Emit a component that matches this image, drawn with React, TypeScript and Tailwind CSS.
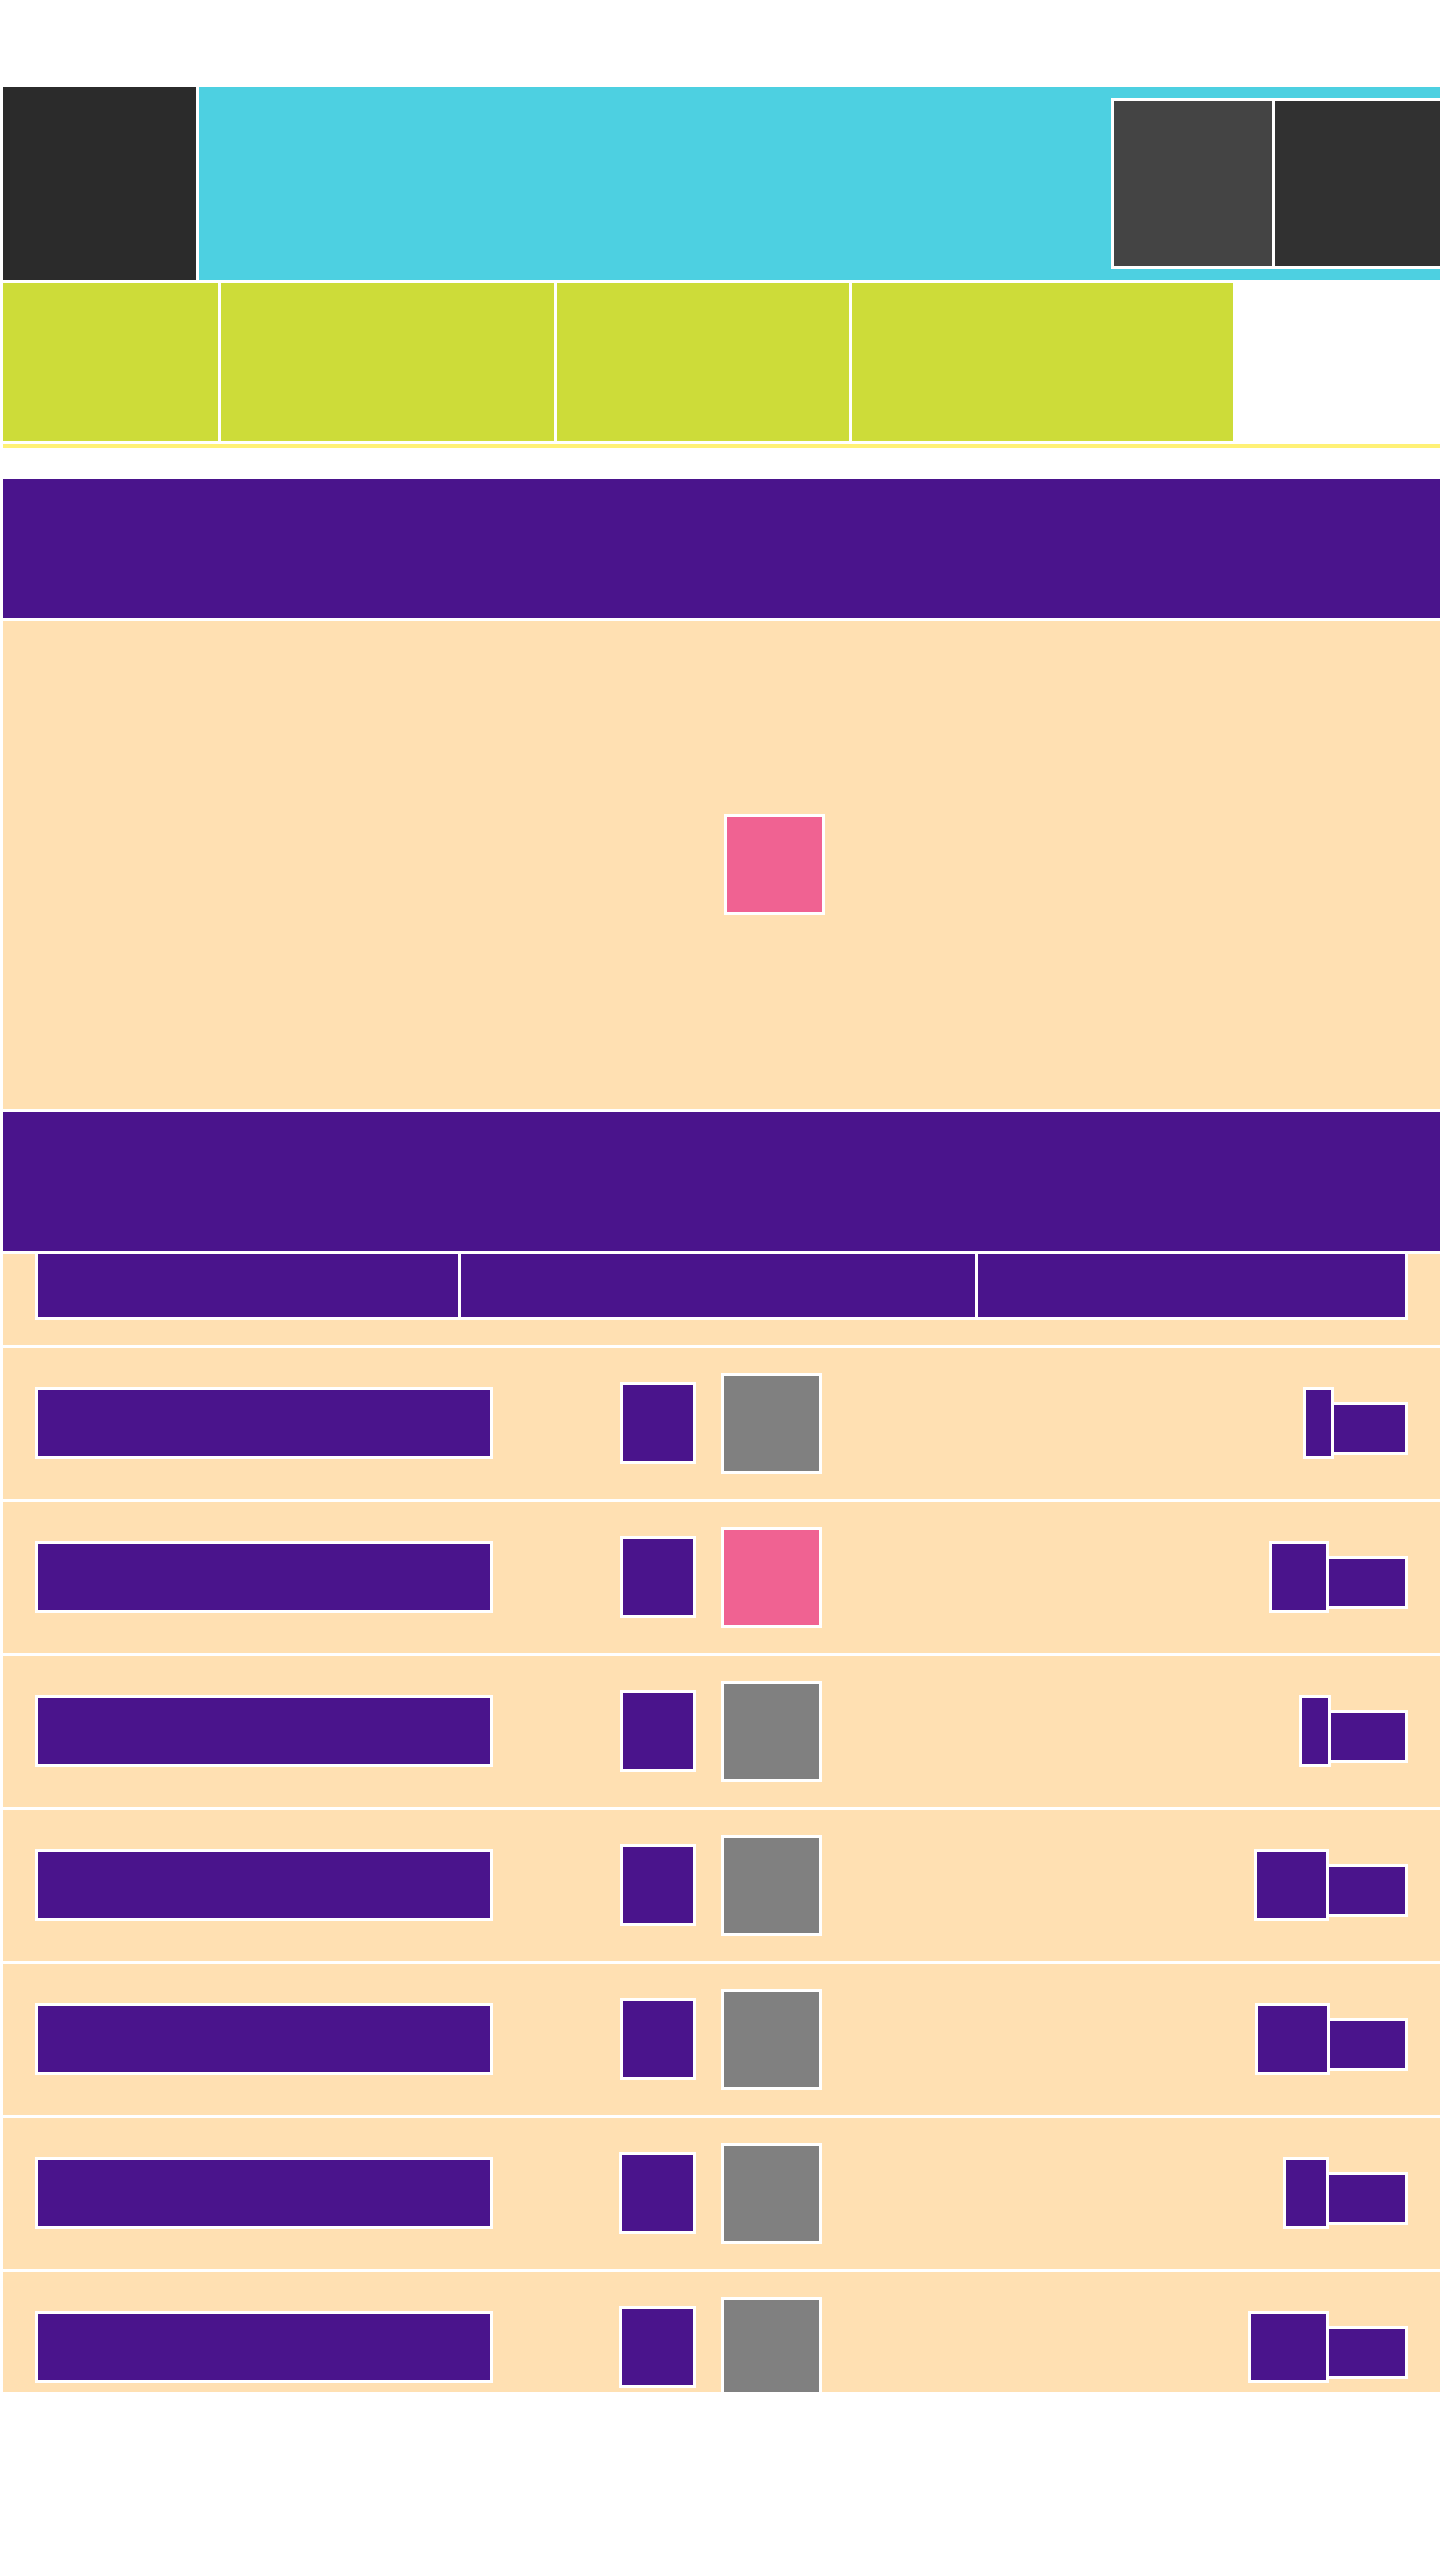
import React from "react";

type Row = {
  mid: string;
  small: string;
  a: string;
  b: string;
  last?: boolean;
};

const rows: Row[] = [
  { mid: "bg-[#808080]", small: "ml-[127px] w-[76px]", a: "w-[31px]", b: "w-[77px]" },
  { mid: "bg-[#f06292]", small: "ml-[127px] w-[76px]", a: "w-[60px]", b: "w-[82px]" },
  { mid: "bg-[#808080]", small: "ml-[127px] w-[76px]", a: "w-[32px]", b: "w-[80px]" },
  { mid: "bg-[#808080]", small: "ml-[127px] w-[76px]", a: "w-[75px]", b: "w-[82px]" },
  { mid: "bg-[#808080]", small: "ml-[127px] w-[76px]", a: "w-[75px]", b: "w-[81px]" },
  { mid: "bg-[#808080]", small: "ml-[126px] w-[77px]", a: "w-[46px]", b: "w-[82px]" },
  { mid: "bg-[#808080]", small: "ml-[126px] w-[77px]", a: "w-[81px]", b: "w-[82px]", last: true },
];

function TableRow({ row }: { row: Row }) {
  return (
    <div
      className={
        row.last
          ? "flex h-[123px] items-start overflow-hidden border-t-[3px] border-white bg-[#ffe0b2] px-[32px]"
          : "flex h-[154px] items-start border-t-[3px] border-white bg-[#ffe0b2] px-[32px]"
      }
    >
      <div className="mt-[39px] h-[72px] w-[458px] shrink-0 border-[3px] border-white bg-[#4a148c]" />
      <div className={`${row.small} mt-[34px] h-[82px] shrink-0 border-[3px] border-white bg-[#4a148c]`} />
      <div className={`ml-[25px] mt-[25px] h-[101px] w-[101px] shrink-0 border-[3px] border-white ${row.mid}`} />
      <div className="ml-auto flex items-start">
        <div className={`${row.a} mt-[39px] h-[72px] shrink-0 border-[3px] border-white bg-[#4a148c]`} />
        <div className={`${row.b} -ml-[3px] mt-[54px] h-[53px] shrink-0 border-[3px] border-white bg-[#4a148c]`} />
      </div>
    </div>
  );
}

export default function App() {
  return (
    <div className="h-[2560px] w-[1440px] overflow-hidden bg-white font-['Liberation_Sans',sans-serif]">
      <div className="pl-[3px] pt-[87px]">
        {/* Header */}
        <header className="flex h-[193px] gap-[3px]">
          <div className="w-[193px] shrink-0 bg-[#2b2b2b]" />
          <div className="flex min-w-0 flex-1 items-center bg-[#4dd0e1] pl-[912px]">
            <div className="flex shrink-0 gap-[3px] border-[3px] border-white bg-white">
              <div className="h-[165px] w-[158px] bg-[#444444]" />
              <div className="h-[165px] w-[170px] bg-[#313131]" />
            </div>
          </div>
        </header>

        {/* Nav */}
        <nav className="mt-[3px] flex h-[158px] gap-[3px]">
          <div className="w-[215px] bg-[#cddc39]" />
          <div className="w-[333px] bg-[#cddc39]" />
          <div className="w-[292px] bg-[#cddc39]" />
          <div className="w-[381px] bg-[#cddc39]" />
        </nav>
        <div className="mt-[3px] h-[4px] bg-[#fff176]" />

        {/* Section heading */}
        <div className="mt-[31px] h-[139px] bg-[#4a148c]" />

        {/* Hero */}
        <div className="mt-[3px] flex h-[488px] items-start bg-[#ffe0b2] pl-[721px] pt-[193px]">
          <div className="h-[101px] w-[101px] border-[3px] border-white bg-[#f06292]" />
        </div>

        {/* Second heading */}
        <div className="mt-[3px] h-[139px] bg-[#4a148c]" />

        {/* Table */}
        <div className="h-[94px] border-t-[3px] border-white bg-[#ffe0b2] px-[32px]">
          <div className="-mt-[3px] flex">
            <div className="h-[69px] w-[426px] shrink-0 border-[3px] border-white bg-[#4a148c]" />
            <div className="-ml-[3px] h-[69px] w-[520px] shrink-0 border-[3px] border-white bg-[#4a148c]" />
            <div className="-ml-[3px] h-[69px] w-[433px] shrink-0 border-[3px] border-white bg-[#4a148c]" />
          </div>
        </div>
        {rows.map((r, i) => (
          <TableRow key={i} row={r} />
        ))}
      </div>
    </div>
  );
}
